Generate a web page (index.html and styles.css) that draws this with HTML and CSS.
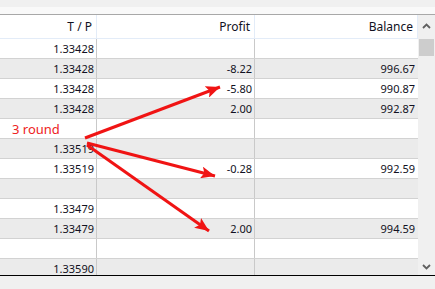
FILE: index.html
```html
<!DOCTYPE html>
<html>
<head>
<meta charset="utf-8">
<link rel="stylesheet" href="styles.css">
</head>
<body>
<div class="page">
  <div class="top"></div>
  <div class="table">
    <div class="cols">
      <div class="row head">
        <div class="cell">T / P</div>
        <div class="cell">Profit</div>
        <div class="cell">Balance</div>
      </div>
      <div class="row"><div class="cell">1.33428</div><div class="cell"></div><div class="cell"></div></div>
      <div class="row alt"><div class="cell">1.33428</div><div class="cell">-8.22</div><div class="cell">996.67</div></div>
      <div class="row"><div class="cell">1.33428</div><div class="cell">-5.80</div><div class="cell">990.87</div></div>
      <div class="row alt"><div class="cell">1.33428</div><div class="cell">2.00</div><div class="cell">992.87</div></div>
      <div class="row"><div class="cell"></div><div class="cell"></div><div class="cell"></div></div>
      <div class="row alt"><div class="cell">1.33519</div><div class="cell"></div><div class="cell"></div></div>
      <div class="row"><div class="cell">1.33519</div><div class="cell">-0.28</div><div class="cell">992.59</div></div>
      <div class="row alt"><div class="cell"></div><div class="cell"></div><div class="cell"></div></div>
      <div class="row"><div class="cell">1.33479</div><div class="cell"></div><div class="cell"></div></div>
      <div class="row alt"><div class="cell">1.33479</div><div class="cell">2.00</div><div class="cell">994.59</div></div>
      <div class="row"><div class="cell"></div><div class="cell"></div><div class="cell"></div></div>
      <div class="row alt"><div class="cell">1.33590</div><div class="cell"></div><div class="cell"></div></div>
    </div>
    <div class="scroll">
      <div class="btn">
        <svg width="9" height="6" viewBox="0 0 9 6"><path d="M1 5 L4.5 1.5 L8 5" fill="none" stroke="#606060" stroke-width="1.8"/></svg>
      </div>
      <div class="thumb"></div>
      <div class="track"></div>
      <div class="btn bottom">
        <svg width="9" height="6" viewBox="0 0 9 6"><path d="M1 1 L4.5 4.5 L8 1" fill="none" stroke="#606060" stroke-width="1.8"/></svg>
      </div>
    </div>
  </div>
  <div class="status"></div>
  <div class="note">3 round</div>
  <svg class="arrows" width="435" height="289" viewBox="0 0 435 289">
    <defs>
      <marker id="ah" markerUnits="userSpaceOnUse" markerWidth="16" markerHeight="12" refX="14" refY="6" orient="auto">
        <path d="M0 0 L14 6 L0 12 L3 6 Z" fill="#f01414"/>
      </marker>
    </defs>
    <g stroke="#f01414" stroke-width="3" fill="none">
      <line x1="85" y1="138" x2="220" y2="87" marker-end="url(#ah)"/>
      <line x1="87" y1="143" x2="215" y2="176" marker-end="url(#ah)"/>
      <line x1="87" y1="145" x2="209" y2="231" marker-end="url(#ah)"/>
    </g>
  </svg>
</div>
</body>
</html>
```
FILE: styles.css
```css
* { box-sizing: border-box; }
html, body { margin: 0; padding: 0; }
body {
  width: 435px;
  height: 289px;
  overflow: hidden;
  background: #f0f0f0;
  font-family: "Noto Sans", "Open Sans", sans-serif;
  font-size: 11px;
  color: #111122;
}
.page { position: relative; width: 435px; height: 289px; }
.top {
  height: 15px;
  background: linear-gradient(#f0f0f0 0, #f0f0f0 7px, #f9f9f9 7px, #f9f9f9 14px);
  border-bottom: 1px solid #a8a8a8;
}
.table {
  display: flex;
  height: 260px;
  overflow: hidden;
}
.cols { width: 418px; background: #fff; }
.row {
  display: grid;
  grid-template-columns: 97px 158px 163px;
  height: 20px;
  border-bottom: 1px solid #d2d2d2;
  background: #fff;
}
.row.alt { background: #ebebeb; }
.cell {
  border-right: 1px solid #c9c9c9;
  text-align: right;
  padding-right: 2px;
  line-height: 19px;
  white-space: nowrap;
}
.row .cell:last-child { border-right: none; padding-right: 3px; }
.row.head {
  height: 24px;
  border-bottom: 1px solid #e3ecf8;
}
.row.head .cell {
  line-height: 23px;
  padding-right: 4px;
  border-right: 1px solid #e3ecf8;
  font-size: 12px;
}
.row.head .cell:last-child { border-right: 1px solid #e3ecf8; padding-right: 4px; }
.scroll {
  width: 17px;
  background: #f0f0f0;
  display: flex;
  flex-direction: column;
}
.btn {
  height: 24px;
  display: flex;
  align-items: center;
  justify-content: center;
  padding-bottom: 3px;
}
.thumb {
  height: 17px;
  margin: 0 1px 0 1px;
  background: #cdcdcd;
}
.track { flex: 1; }
.btn.bottom { height: 19px; padding-bottom: 0; padding-top: 2px; }
.status {
  height: 14px;
  border-top: 1px solid #000;
  background: #f0f0f0;
}
.note {
  position: absolute;
  left: 12px;
  top: 120px;
  color: #ee2222;
  font-size: 13px;
  line-height: 18px;
}
.arrows { position: absolute; left: 0; top: 0; pointer-events: none; }
```
